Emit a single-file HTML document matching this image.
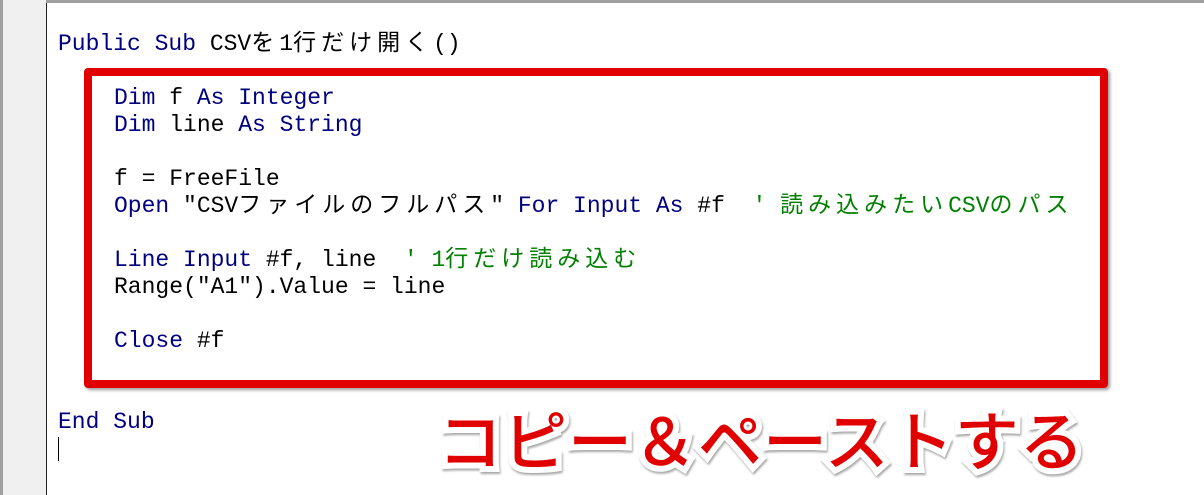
<!DOCTYPE html>
<html><head><meta charset="utf-8"><style>
html,body{margin:0;padding:0;}
body{width:1204px;height:495px;position:relative;background:#fff;overflow:hidden;font-family:"Liberation Mono","Noto Sans CJK JP",monospace;}
.gut{position:absolute;left:0;top:0;width:46px;height:495px;background:#f0f0f0;border-left:3px solid #a0a0a0;box-sizing:border-box;}
.top{position:absolute;left:0;top:0;width:1204px;height:3px;background:#a0a0a0;}
.vl{position:absolute;left:46px;top:3px;width:1px;height:492px;background:#222;}
.ln{position:absolute;font-size:23px;line-height:27px;height:27px;white-space:pre;color:#000080;}
.k{color:#000080}.b{color:#000}.g{color:#008000}
.j{font-family:"Noto Sans CJK JP",sans-serif;letter-spacing:5px;font-size:23px;line-height:1px;}
.box{position:absolute;left:84px;top:68px;width:1024px;height:320px;box-sizing:border-box;border:8px solid #e00000;border-radius:4px;box-shadow:2px 2px 3px rgba(0,0,0,.4);}
.big{position:absolute;left:438px;top:398px;font-family:"Noto Sans CJK JP",sans-serif;font-weight:500;font-size:64px;line-height:80px;color:#e00000;white-space:nowrap;-webkit-text-stroke:12px #fff;paint-order:stroke fill;filter:drop-shadow(1px 2px 1px rgba(0,0,0,.35));letter-spacing:1px;}
.cur{position:absolute;left:58px;top:437px;width:1px;height:24px;background:#000;}
</style></head><body>
<div class="top"></div><div class="gut"></div><div class="vl"></div>
<div class="ln" style="left:58px;top:31px">Public Sub <span class="b">CSV<span class="j">を</span>1<span class="j">行だけ開く</span>()</span></div>
<div class="box"></div>
<div class="ln" style="left:114px;top:85px">Dim <span class="b">f</span> As Integer</div>
<div class="ln" style="left:114px;top:112px">Dim <span class="b">line</span> As String</div>
<div class="ln b" style="left:114px;top:166px;color:#000">f = FreeFile</div>
<div class="ln" style="left:114px;top:193px">Open <span class="b">"CSV<span class="j">ファイルのフルパス</span>"</span> For Input As <span class="b">#f</span>  <span class="g">' <span class="j">読み込みたい</span>CSV<span class="j">のパス</span></span></div>
<div class="ln" style="left:114px;top:247px">Line Input <span class="b">#f, line</span>  <span class="g">' 1<span class="j">行だけ読み込む</span></span></div>
<div class="ln b" style="left:114px;top:274px;color:#000">Range("A1").Value = line</div>
<div class="ln" style="left:114px;top:328px">Close <span class="b">#f</span></div>
<div class="ln" style="left:58px;top:409px">End Sub</div>
<div class="cur"></div>
<div class="big">コピー＆ペーストする</div>
</body></html>
